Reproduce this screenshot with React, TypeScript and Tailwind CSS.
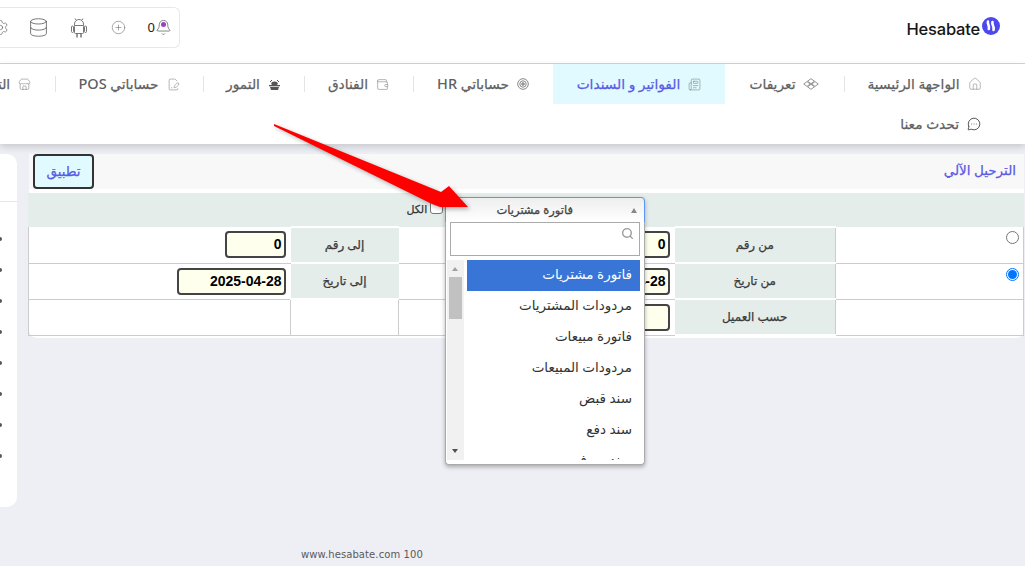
import React from "react";
import { Home, Newspaper, Wallet, FileSignature, Store, MessageCircleMore, CirclePlus, Database, Bell, Search, Settings } from "lucide-react";

const font = "font-['Noto_Sans','DejaVu_Sans',sans-serif]";
const ar = "font-normal [-webkit-text-stroke:0.25px]";

function Target() {
  return (
    <svg width="12" height="12" viewBox="0 0 12 12" fill="none" stroke="#888" strokeWidth="1">
      <circle cx="6" cy="6" r="5.300" />
      <circle cx="6" cy="6" r="3.200" />
      <circle cx="6" cy="6" r="1.300" fill="#aaa" />
    </svg>
  );
}

function Diamonds() {
  return (
    <svg width="16" height="12" viewBox="0 0 16 12" fill="none" stroke="#888" strokeWidth="0.9">
      <path d="M8 .7l3.500 2.500L8 5.700 4.500 3.200z" />
      <path d="M8 6.300l3.500 2.500L8 11.300 4.500 8.800z" />
      <path d="M4 3.600L.7 6l3.300 2.400L7.300 6zM12 3.600L15.300 6 12 8.400 8.700 6z" />
    </svg>
  );
}

function Dates() {
  return (
    <svg width="13" height="13" viewBox="0 0 13 13" fill="#555">
      <ellipse cx="6.500" cy="5.500" rx="3.200" ry="2" />
      <rect x="1" y="7" width="11" height="1.300" />
      <path d="M2 9h9l-1 3H3z" />
      <path d="M2 4l2-2M11 4L9 2" stroke="#555" fill="none" />
    </svg>
  );
}

function Android() {
  return (
    <svg width="16" height="20" viewBox="0 0 16 20" fill="none" stroke="#777" strokeWidth="1" className="shrink-0 mr-[2px]">
      <path d="M3.500 7.500V6a4.500 4.500 0 0 1 9 0v1.500z" />
      <path d="M5 2L4 .5M11 2l1-1.500" />
      <rect x="3.500" y="7.500" width="9" height="8" rx="1" />
      <rect x=".5" y="8" width="2" height="6.500" rx="1" />
      <rect x="13.500" y="8" width="2" height="6.500" rx="1" />
      <path d="M6 15.500v4M10 15.500v4" strokeWidth="1.500" />
    </svg>
  );
}

type Tab = { label: React.ReactNode; key: string; w: string; icon: React.ReactNode; active?: boolean; sep?: boolean; first?: boolean };

const Latin = ({ children }: { children: React.ReactNode }) => (
  <span className="text-[14.500px] font-medium [-webkit-text-stroke:0px]">{children}</span>
);

const tabs: Tab[] = [
  { key: "home", label: "الواجهة الرئيسية", w: "w-[181px]", icon: <Home size={14} strokeWidth={1} color="#888" />, sep: true, first: true },
  { key: "defs", label: "تعريفات", w: "w-[119px]", icon: <Diamonds /> },
  { key: "inv", label: "الفواتير و السندات", w: "w-[172px]", icon: <Newspaper size={13} strokeWidth={1} color="#777" />, active: true },
  { key: "hr", label: <>حساباتي <Latin>HR</Latin></>, w: "w-[140px]", icon: <Target />, sep: true },
  { key: "hotels", label: "الفنادق", w: "w-[109px]", icon: <Wallet size={13} strokeWidth={1} color="#777" />, sep: true },
  { key: "dates", label: "التمور", w: "w-[101px]", icon: <Dates />, sep: true },
  { key: "pos", label: <>حساباتي <Latin>POS</Latin></>, w: "w-[148px]", icon: <FileSignature size={13} strokeWidth={1} color="#777" />, sep: true },
  { key: "rep", label: "التقارير", w: "w-[110px]", icon: <Store size={13} strokeWidth={1} color="#777" /> },
];

function TabItem({ t }: { t: Tab }) {
  return (
    <div className={`${t.w} shrink-0 h-10 flex items-center justify-center gap-[8px] relative ${t.first ? "pr-[20px]" : ""} ${t.active ? "bg-[#e0faff] text-[#5a5ae6]" : "text-[#5f5f5f]"}`}>
      <span className="shrink-0 flex items-center">{t.icon}</span>
      <span className={`text-[13.750px] whitespace-nowrap ${ar}`}>{t.label}</span>
      {t.sep && <span className="absolute left-0 top-[12px] h-[16px] w-px bg-[#e4e4e4]" />}
    </div>
  );
}

const Label = ({ children }: { children: React.ReactNode }) => (
  <td className={`bg-[#e5edeb] border-y-2 border-white text-center text-[12px] text-[#3a3a3a] align-middle ${ar}`}>{children}</td>
);

const inputCls = "h-[27px] border-2 border-[#444] rounded-[4px] bg-[#ffffee] font-['Liberation_Sans',sans-serif] font-bold text-[14px] text-black flex items-center justify-end pr-[2px] pl-1";

const Field = ({ w, v }: { w: string; v: string }) => (
  <div className="flex justify-start pr-[5px]" dir="rtl">
    <div className={`${inputCls} ${w}`} dir="ltr">{v}</div>
  </div>
);

const Radio = ({ on }: { on?: boolean }) => (
  <div className="flex justify-start pr-[4px] h-full items-start pt-[4px]">
    <div className={`w-[13px] h-[13px] rounded-full border flex items-center justify-center ${on ? "border-[#0075ff]" : "border-[#767676]"}`}>
      {on && <div className="w-[9px] h-[9px] rounded-full bg-[#0075ff]" />}
    </div>
  </div>
);

const options = ["فاتورة مشتريات", "مردودات المشتريات", "فاتورة مبيعات", "مردودات المبيعات", "سند قبض", "سند دفع", "سند صرف"];

export default function App() {
  return (
    <div className={`h-[566px] w-[1025px] overflow-hidden bg-[#eeeff5] relative ${font}`}>
      {/* header */}
      <header className="h-[64px] bg-white border-b border-[#d4d4d4] flex items-start justify-between">
        <div className="mt-[7px] w-[180px] h-[41px] border border-[#e8e8e8] rounded-r-[6px] border-l-0 flex items-center justify-end gap-[22px] pr-[7px] overflow-hidden">
          <Settings size={17} strokeWidth={1} color="#666" className="shrink-0 -mr-[3px]" />
          <Database size={21} strokeWidth={1} color="#666" className="shrink-0" />
          <Android />
          <CirclePlus size={15} strokeWidth={1} color="#777" className="shrink-0" />
          <div className="flex items-center relative shrink-0">
            <span className="text-[13px] text-[#222] leading-none">0</span>
            <Bell size={17} strokeWidth={1} color="#555" />
            <span className="absolute right-[6px] top-[3px] w-[5px] h-[5px] rounded-full bg-[#9b3fc4]" />
          </div>
        </div>
        <div className="mt-[17px] mr-[25px] flex items-start gap-[2px]">
          <span className="font-['Inter',sans-serif] text-[16.500px] font-medium text-[#161616] tracking-[-0.2px] leading-none mt-[4px]">Hesabate</span>
          <svg width="18" height="18" viewBox="0 0 18 18" className="shrink-0">
            <circle cx="9" cy="9" r="9" fill="#4b48ee" />
            <path d="M6 4.500c-1 2.500 1.800 3.500 .8 7.500M10.500 5c-1 3 2 3.500 1 8" stroke="#fff" strokeWidth="2.600" fill="none" strokeLinecap="round" />
          </svg>
        </div>
      </header>

      {/* nav */}
      <nav dir="rtl" className="h-[80px] bg-white shadow-[0_3px_7px_rgba(0,0,0,0.16)] relative">
        <div className="flex h-10 overflow-hidden w-[1025px]">
          {tabs.map((t) => (
            <TabItem key={t.key} t={t} />
          ))}
        </div>
        <div className="h-10 flex items-center gap-[8px] pr-[44px] text-[#5f5f5f]">
          <MessageCircleMore size={14} strokeWidth={1.300} color="#222" />
          <span className={`text-[13.750px] ${ar}`}>تحدث معنا</span>
        </div>
      </nav>

      {/* main */}
      <main className="flex items-start gap-[12px] pt-[10px]">
        <aside className="w-[17px] h-[353px] bg-white rounded-r-[10px] shrink-0">
          <div className="h-[48px] border-b border-[#e6e6e6]" />
          <div className="flex flex-col gap-[27px] pt-[35px]">
            {Array.from({ length: 8 }).map((_, i) => (
              <span key={i} className="w-[4px] h-[4px] rounded-full bg-[#555] -ml-[2px]" />
            ))}
          </div>
        </aside>

        <section dir="rtl" className="w-[995px] h-[184px] bg-white rounded-b-[8px] shrink-0">
          <div className="h-[35px] bg-[#f8f8f8] flex items-center justify-between pl-[4px] pr-[8px]">
            <span className={`text-[13.500px] text-[#5a5ae6] -mt-[3px] ${ar}`}>الترحيل الآلي</span>
            <button className={`w-[61px] h-[35px] bg-[#e0faff] border-2 border-[#333] rounded-[4px] text-[13.500px] text-[#5a5ae6] ${ar}`}>تطبيق</button>
          </div>
          <table className="w-[995px] mt-[4px] table-fixed border-collapse text-[12px]">
            <colgroup>
              <col className="w-[188px]" />
              <col className="w-[161px]" />
              <col className="w-[276px]" />
              <col className="w-[108px]" />
              <col className="w-[262px]" />
            </colgroup>
            <tbody>
              <tr className="h-[34px] bg-[#e5edeb]">
                <td colSpan={5} className="align-middle">
                  <div className="flex items-center justify-start pl-[378px] gap-[3px]" dir="ltr">
                    <span className={`text-[11px] text-[#333] ${ar}`}>الكل</span>
                    <span className="w-[13px] h-[13px] border border-[#767676] rounded-[3px] bg-white mb-[5px]" />
                  </div>
                </td>
              </tr>
              <tr className="h-[36px] border-b border-[#ccc]">
                <td className="border-l border-r border-[#ccc] align-top"><Radio /></td>
                <Label>من رقم</Label>
                <td><Field w="w-[61px]" v="0" /></td>
                <Label>إلى رقم</Label>
                <td className="border-l border-[#ccc]"><Field w="w-[61px]" v="0" /></td>
              </tr>
              <tr className="h-[36px] border-b border-[#ccc]">
                <td className="border-l border-r border-[#ccc] align-top"><Radio on /></td>
                <Label>من تاريخ</Label>
                <td><Field w="w-[109px]" v="2025-04-28" /></td>
                <Label>إلى تاريخ</Label>
                <td className="border-l border-[#ccc]"><Field w="w-[109px]" v="2025-04-28" /></td>
              </tr>
              <tr className="h-[36px] border-b border-[#ccc]">
                <td className="border-l border-r border-[#ccc]" />
                <Label>حسب العميل</Label>
                <td><Field w="w-[200px]" v="" /></td>
                <td className="border-l border-r border-[#ccc]" />
                <td className="border-l border-[#ccc]" />
              </tr>
            </tbody>
          </table>
        </section>
      </main>

      <footer className="pl-[301px] mt-[40px] font-['DejaVu_Sans',sans-serif] text-[10px] text-[#5a5a5a] tracking-[0.1px]">www.hesabate.com 100</footer>

      {/* open select dropdown */}
      <div dir="rtl" className="absolute left-[445px] top-[197px] w-[200px] h-[268px] bg-white rounded-[4px] border border-[#aaa] border-t-[#5897fb] shadow-[0_2px_4px_rgba(0,0,0,0.3)]">
        <div className={`h-[24px] bg-gradient-to-b from-[#eeeeee] to-white flex items-center justify-start pr-[71px] relative text-[11.500px] text-[#444] border-x border-[#5897fb] -mx-px rounded-t-[4px] ${ar}`}>
          <span>فاتورة مشتريات</span>
          <span className="absolute left-[185px] top-[10px] w-0 h-0 border-x-[3px] border-x-transparent border-b-[5px] border-b-[#888]" />
        </div>
        <div className="mx-[4px] h-[34px] border border-[#aaa] flex items-start justify-end pr-[5px] pt-[4px]" dir="ltr">
          <Search size={13} strokeWidth={2.500} color="#999" />
        </div>
        <div className="flex h-[200px] mt-[4px] overflow-hidden" dir="ltr">
          <div className="w-[17px] ml-[1px] bg-[#f1f1f1] relative shrink-0">
            <span className="absolute left-[5px] top-[7px] w-0 h-0 border-x-[3px] border-x-transparent border-b-[4px] border-b-[#a0a0a0]" />
            <span className="absolute left-[2px] top-[17px] w-[13px] h-[42px] bg-[#c1c1c1]" />
            <span className="absolute left-[5px] bottom-[7px] w-0 h-0 border-x-[3px] border-x-transparent border-t-[4px] border-t-[#505050]" />
          </div>
          <ul dir="rtl" className="w-[173px] ml-[3px] shrink-0">
            {options.map((o, i) => (
              <li key={o} className={`h-[31px] flex items-center pr-[8px] pb-[3px] text-[13.500px] whitespace-nowrap ${i === 0 ? "bg-[#3875d7] text-white" : "text-[#333]"}`}>{o}</li>
            ))}
          </ul>
        </div>
      </div>

      {/* annotation arrow */}
      <svg className="absolute left-0 top-0 pointer-events-none drop-shadow-[2px_2px_2px_rgba(0,0,0,0.3)]" width="1025" height="566">
        <polygon points="274,124 441,192 449,186 468,207 440,207 432,204 274,126" fill="#ff0000" />
      </svg>
    </div>
  );
}
